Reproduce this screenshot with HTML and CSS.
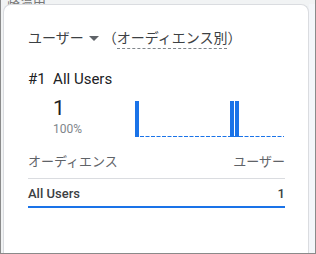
FILE: index.html
```html
<!DOCTYPE html>
<html lang="ja">

<head>
    <meta charset="UTF-8">
    <title>ユーザー（オーディエンス別）</title>
    <link rel="stylesheet" href="styles.css">
</head>

<body>
    <div class="frame">
        <div class="backdrop">路温由</div>
        <div class="stage">
            <!-- カード本体 -->
            <div class="card">
                <div class="card-title">
                    <span class="metric">ユーザー</span>
                    <span class="caret"></span>
                    <span class="dimension">（<span class="dim-label">オーディエンス別</span>）</span>
                </div>

                <div class="top-item">
                    <div class="rank">#1&nbsp; All Users</div>
                    <div class="top-body">
                        <div class="top-value">
                            <div class="big">1</div>
                            <div class="pct">100%</div>
                        </div>
                        <svg class="spark" width="149" height="36" viewBox="0 0 149 36">
                            <line x1="5" y1="35.5" x2="149" y2="35.5" stroke="#1a73e8" stroke-width="1" stroke-dasharray="4 1.5" />
                            <rect x="0" y="0" width="4" height="36" fill="#1a73e8" />
                            <rect x="95" y="0" width="4" height="36" fill="#1a73e8" />
                            <rect x="100" y="0" width="4" height="36" fill="#1a73e8" />
                        </svg>
                    </div>
                </div>

                <div class="table">
                    <div class="table-head">
                        <span>オーディエンス</span>
                        <span>ユーザー</span>
                    </div>
                    <div class="table-row">
                        <span>All Users</span>
                        <span>1</span>
                    </div>
                </div>
            </div>
            <div class="side"></div>
        </div>
    </div>
</body>

</html>
```

FILE: styles.css
```css
* {
    box-sizing: border-box;
    margin: 0;
    padding: 0;
}

body {
    width: 316px;
    height: 254px;
    overflow: hidden;
    font-family: Roboto, "Noto Sans CJK JP", sans-serif;
    background-color: #fff;
    color: #3c4043;
}

.frame {
    width: 316px;
    height: 254px;
    border: 1px solid #8a8a8a;
    border-top: none;
    background-color: #f1f3f4;
    display: flex;
    flex-direction: column;
    position: relative;
}

/* 上端にわずかに見える背景の文字 */
.backdrop {
    position: absolute;
    top: -9px;
    left: 6px;
    font-size: 13px;
    color: #777;
}

.stage {
    flex: 1;
    display: flex;
    padding: 4px 0 0 2px;
    position: relative;
}

.card {
    flex: 1;
    background-color: #fff;
    border: 1px solid #dadce0;
    border-bottom: none;
    border-radius: 8px 8px 0 0;
    padding: 23px 23px 0 24px;
}

.side {
    width: 6px;
    background-color: #f4f6fa;
}

.card-title {
    display: flex;
    align-items: center;
    font-size: 14px;
    line-height: 20px;
    color: #3c4043;
}

.caret {
    width: 0;
    height: 0;
    border-left: 5px solid transparent;
    border-right: 5px solid transparent;
    border-top: 5px solid #5f6368;
    margin: 0 4px 0 5px;
}

.dim-label {
    border-bottom: 1px dashed #80868b;
    padding-bottom: 2px;
}

.top-item {
    margin-top: 22px;
}

.rank {
    font-size: 15px;
    line-height: 18px;
    color: #202124;
}

.top-body {
    display: flex;
    align-items: flex-start;
    margin-top: 8px;
}

.top-value {
    width: 107px;
    padding-left: 25px;
}

.big {
    font-size: 21px;
    line-height: 24px;
    color: #202124;
}

.pct {
    font-size: 12px;
    line-height: 14px;
    color: #80868b;
    margin-top: 2px;
}

.spark {
    margin-top: 5px;
}

.table {
    margin-top: 17px;
}

.table-head {
    display: flex;
    justify-content: space-between;
    font-size: 13px;
    line-height: 16px;
    color: #5f6368;
    padding-bottom: 8px;
    border-bottom: 1px solid #dadce0;
}

.table-row {
    display: flex;
    justify-content: space-between;
    font-size: 13px;
    font-weight: 500;
    line-height: 16px;
    color: #3c4043;
    padding: 7px 0 4px;
    border-bottom: 2px solid #1a73e8;
}
```
